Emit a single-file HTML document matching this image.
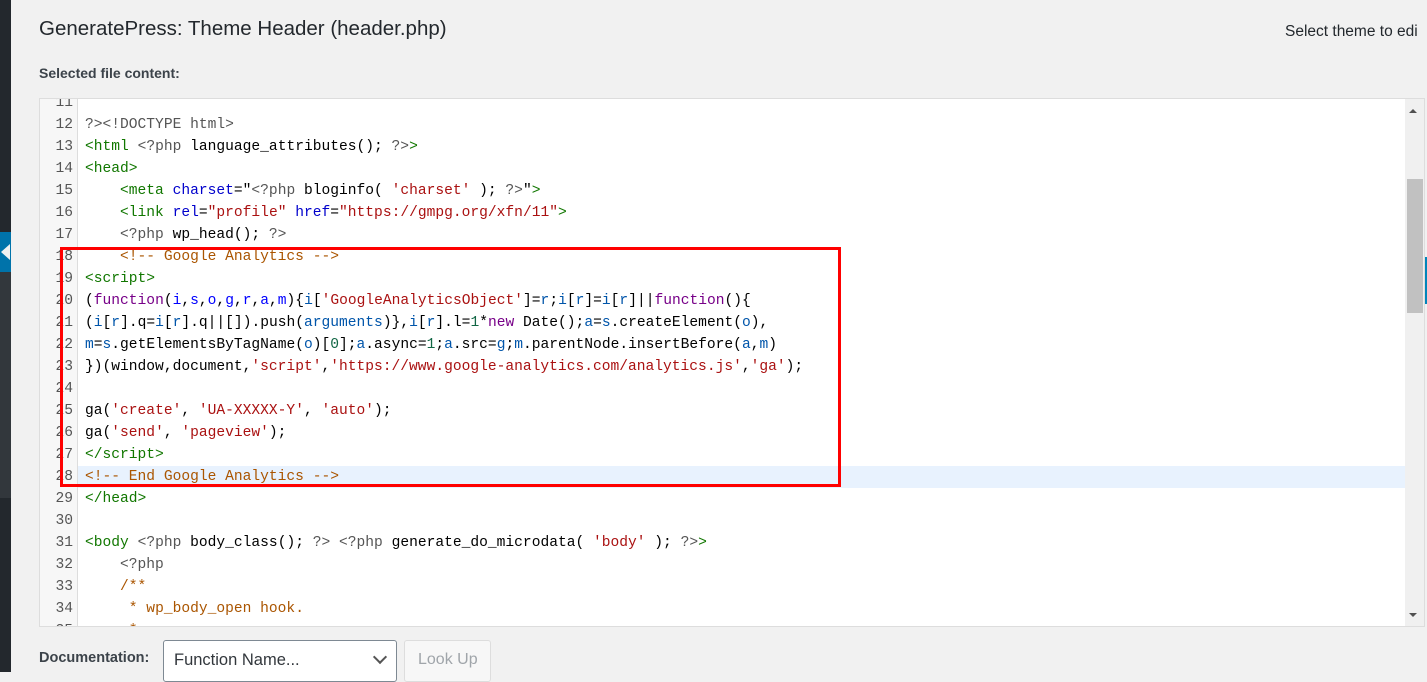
<!DOCTYPE html>
<html><head><style>
body{margin:0;width:1427px;height:672px;background:#f1f1f1;position:relative;overflow:hidden;font-family:"Liberation Sans",sans-serif;}
.side{position:absolute;left:0;top:0;width:11px;height:672px;background:#23282d;}
.side2{position:absolute;left:0;top:272px;width:11px;height:226px;background:#32373c;}
.tab{position:absolute;left:0;top:232px;width:11px;height:40px;background:#0073aa;}
.arr{position:absolute;left:1px;top:244px;width:0;height:0;border-top:8px solid transparent;border-bottom:8px solid transparent;border-right:9px solid #f1f1f1;}
h1{position:absolute;left:39px;top:17px;margin:0;font-size:20.5px;font-weight:normal;color:#23282d;}
.sel{position:absolute;left:39px;top:65px;font-size:14px;font-weight:bold;color:#3c434a;}
.sth{position:absolute;left:1285px;top:23px;font-size:15.5px;color:#23282d;white-space:nowrap;}
.ed{position:absolute;left:39px;top:98px;width:1384px;height:527px;border:1px solid #ddd;background:#fff;overflow:hidden;}
.gut{position:absolute;left:0;top:0;width:37px;height:527px;background:#f7f7f7;border-right:1px solid #ddd;}
.lines{position:absolute;left:0;top:-7px;width:1365px;font-family:"Liberation Mono",monospace;font-size:14.6px;line-height:22px;}
.l{height:22px;white-space:pre;position:relative;}
.n{display:inline-block;width:33px;text-align:right;color:#555;}
.c{position:absolute;left:45px;top:0;color:#000;}
.hlbg{position:absolute;left:38px;right:0;top:0;height:22px;background:#e8f2fe;}
.t{color:#170}.a{color:#00c}.s{color:#a11}.m{color:#555}.cm{color:#a50}.k{color:#708}.v{color:#05a}.d{color:#00f}.nu{color:#164}
.sb{position:absolute;left:1365px;top:0;width:19px;height:527px;background:#f0f0f0;}
.th{position:absolute;left:1367px;top:80px;width:16px;height:134px;background:#c1c1c1;}
.up{position:absolute;left:1369px;top:10px;border-left:4px solid transparent;border-right:4px solid transparent;border-bottom:4px solid #505050;}
.dn{position:absolute;left:1369px;top:514px;border-left:4px solid transparent;border-right:4px solid transparent;border-top:4px solid #505050;}
.red{position:absolute;left:60px;top:247px;width:775px;height:234px;border:3px solid #f00;}
.blue{position:absolute;left:1425px;top:257px;width:2px;height:47px;background:#0085ba;}
.doc{position:absolute;left:39px;top:650px;font-size:14.5px;font-weight:bold;color:#3c434a;}
.selb{position:absolute;left:163px;top:640px;width:232px;height:40px;border:1px solid #7e8993;border-radius:3px;background:#fff;}
.selb span{position:absolute;left:10px;top:10px;font-size:16.5px;color:#32373c;}
.chev{position:absolute;left:211px;top:11px;width:8px;height:8px;border-right:2px solid #555;border-bottom:2px solid #555;transform:rotate(45deg);}
.btn{position:absolute;left:404px;top:640px;width:85px;height:40px;border:1px solid #ddd;border-radius:3px;background:#f7f7f7;}
.btn span{position:absolute;left:13px;top:10px;font-size:16px;color:#a0a5aa;}
</style></head><body>
<div class="side"></div><div class="side2"></div><div class="tab"></div><div class="arr"></div>
<h1>GeneratePress: Theme Header (header.php)</h1>
<div class="sel">Selected file content:</div>
<div class="sth">Select theme to edi</div>
<div class="blue"></div>
<div class="ed">
<div class="gut"></div>
<div class="lines">
<div class="l"><span class="n">11</span></div>
<div class="l"><span class="n">12</span><span class="c"><span class="m">?&gt;</span><span class="m">&lt;!DOCTYPE html&gt;</span></span></div>
<div class="l"><span class="n">13</span><span class="c"><span class="t">&lt;html</span> <span class="m">&lt;?php</span> language_attributes(); <span class="m">?&gt;</span><span class="t">&gt;</span></span></div>
<div class="l"><span class="n">14</span><span class="c"><span class="t">&lt;head&gt;</span></span></div>
<div class="l"><span class="n">15</span><span class="c">    <span class="t">&lt;meta</span> <span class="a">charset</span>="<span class="m">&lt;?php</span> bloginfo( <span class="s">'charset'</span> ); <span class="m">?&gt;</span>"<span class="t">&gt;</span></span></div>
<div class="l"><span class="n">16</span><span class="c">    <span class="t">&lt;link</span> <span class="a">rel</span>=<span class="s">"profile"</span> <span class="a">href</span>=<span class="s">"https://gmpg.org/xfn/11"</span><span class="t">&gt;</span></span></div>
<div class="l"><span class="n">17</span><span class="c">    <span class="m">&lt;?php</span> wp_head(); <span class="m">?&gt;</span></span></div>
<div class="l"><span class="n">18</span><span class="c">    <span class="cm">&lt;!-- Google Analytics --&gt;</span></span></div>
<div class="l"><span class="n">19</span><span class="c"><span class="t">&lt;script&gt;</span></span></div>
<div class="l"><span class="n">20</span><span class="c">(<span class="k">function</span>(<span class="d">i</span>,<span class="d">s</span>,<span class="d">o</span>,<span class="d">g</span>,<span class="d">r</span>,<span class="d">a</span>,<span class="d">m</span>){<span class="v">i</span>[<span class="s">'GoogleAnalyticsObject'</span>]=<span class="v">r</span>;<span class="v">i</span>[<span class="v">r</span>]=<span class="v">i</span>[<span class="v">r</span>]||<span class="k">function</span>(){</span></div>
<div class="l"><span class="n">21</span><span class="c">(<span class="v">i</span>[<span class="v">r</span>].q=<span class="v">i</span>[<span class="v">r</span>].q||[]).push(<span class="v">arguments</span>)},<span class="v">i</span>[<span class="v">r</span>].l=<span class="nu">1</span>*<span class="k">new</span> Date();<span class="v">a</span>=<span class="v">s</span>.createElement(<span class="v">o</span>),</span></div>
<div class="l"><span class="n">22</span><span class="c"><span class="v">m</span>=<span class="v">s</span>.getElementsByTagName(<span class="v">o</span>)[<span class="nu">0</span>];<span class="v">a</span>.async=<span class="nu">1</span>;<span class="v">a</span>.src=<span class="v">g</span>;<span class="v">m</span>.parentNode.insertBefore(<span class="v">a</span>,<span class="v">m</span>)</span></div>
<div class="l"><span class="n">23</span><span class="c">})(window,document,<span class="s">'script'</span>,<span class="s">'https://www.google-analytics.com/analytics.js'</span>,<span class="s">'ga'</span>);</span></div>
<div class="l"><span class="n">24</span></div>
<div class="l"><span class="n">25</span><span class="c">ga(<span class="s">'create'</span>, <span class="s">'UA-XXXXX-Y'</span>, <span class="s">'auto'</span>);</span></div>
<div class="l"><span class="n">26</span><span class="c">ga(<span class="s">'send'</span>, <span class="s">'pageview'</span>);</span></div>
<div class="l"><span class="n">27</span><span class="c"><span class="t">&lt;/script&gt;</span></span></div>
<div class="l"><div class="hlbg"></div><span class="n">28</span><span class="c"><span class="cm">&lt;!-- End Google Analytics --&gt;</span></span></div>
<div class="l"><span class="n">29</span><span class="c"><span class="t">&lt;/head&gt;</span></span></div>
<div class="l"><span class="n">30</span></div>
<div class="l"><span class="n">31</span><span class="c"><span class="t">&lt;body</span> <span class="m">&lt;?php</span> body_class(); <span class="m">?&gt;</span> <span class="m">&lt;?php</span> generate_do_microdata( <span class="s">'body'</span> ); <span class="m">?&gt;</span><span class="t">&gt;</span></span></div>
<div class="l"><span class="n">32</span><span class="c">    <span class="m">&lt;?php</span></span></div>
<div class="l"><span class="n">33</span><span class="c">    <span class="cm">/**</span></span></div>
<div class="l"><span class="n">34</span><span class="c">     <span class="cm">* wp_body_open hook.</span></span></div>
<div class="l"><span class="n">35</span><span class="c">     <span class="cm">*</span></span></div>
</div>
<div class="sb"></div><div class="th"></div><div class="up"></div><div class="dn"></div>
</div>
<div class="red"></div>
<div class="doc">Documentation:</div>
<div class="selb"><span>Function Name...</span><div class="chev"></div></div>
<div class="btn"><span>Look Up</span></div>
</body></html>
